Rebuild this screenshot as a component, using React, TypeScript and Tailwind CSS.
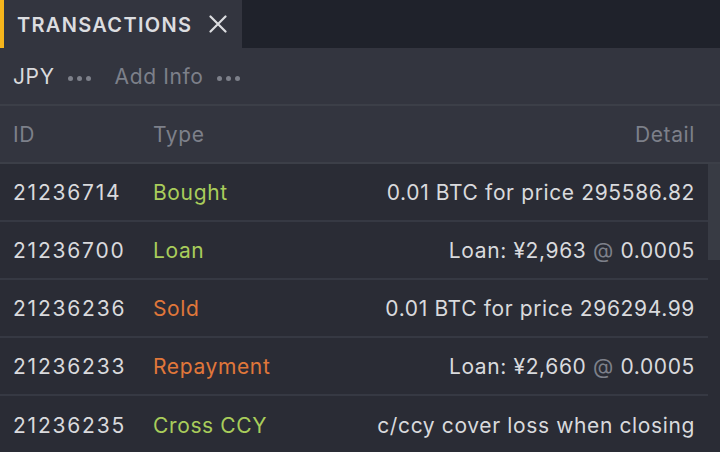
import React from "react";

type Row = { id: string; type: string; kind: "buy" | "sell"; detail: React.ReactNode };

const Loan = ({ amt }: { amt: string }) => (
  <>
    Loan: ¥{amt} <span className="text-[#7d808a]">@</span> 0.0005
  </>
);

const rows: Row[] = [
  { id: "21236714", type: "Bought", kind: "buy", detail: "0.01 BTC for price 295586.82" },
  { id: "21236700", type: "Loan", kind: "buy", detail: <Loan amt="2,963" /> },
  { id: "21236236", type: "Sold", kind: "sell", detail: "0.01 BTC for price 296294.99" },
  { id: "21236233", type: "Repayment", kind: "sell", detail: <Loan amt="2,660" /> },
  { id: "21236235", type: "Cross CCY", kind: "buy", detail: "c/ccy cover loss when closing" },
];

const Dots = () => (
  <span className="flex items-center gap-[4px] ml-[13px] mt-[2px]">
    <span className="w-[5px] h-[5px] rounded-full bg-[#7d808a]" />
    <span className="w-[5px] h-[5px] rounded-full bg-[#7d808a]" />
    <span className="w-[5px] h-[5px] rounded-full bg-[#7d808a]" />
  </span>
);

export default function App() {
  return (
    <div
      className="w-[720px] h-[452px] overflow-hidden bg-[#2a2c35] text-[#d9dadd] text-[21px] tracking-[0.03em]"
      style={{ fontFamily: "Inter, 'Noto Sans', sans-serif" }}
    >
      {/* tab bar */}
      <div className="flex h-[48px] bg-[#1f222b]">
        <div className="flex items-center w-[242px] h-full bg-[#33353f] border-l-4 border-[#f6b51c] pl-[13px]">
          <span className="font-semibold tracking-[0.065em] text-[20px] text-[#dcdde0] mt-[1px]">TRANSACTIONS</span>
          <svg className="ml-[17px]" width="18" height="18" viewBox="0 0 18 18">
            <path d="M1.5 1.5 L16.5 16.5 M16.5 1.5 L1.5 16.5" stroke="#dcdde0" strokeWidth="2.2" strokeLinecap="round" />
          </svg>
        </div>
      </div>
      {/* toolbar */}
      <div className="flex items-center h-[58px] pt-[2px] bg-[#33353f] border-b-2 border-[#3c3f48] px-[13px]">
        <span className="text-[#d9dadd]">JPY</span>
        <Dots />
        <span className="ml-[24px] text-[#7d808a]">Add Info</span>
        <Dots />
      </div>
      {/* header */}
      <div className="flex items-center h-[58px] pt-[2px] bg-[#33353f] border-b-2 border-[#3c3f48] pl-[13px] pr-[25px] text-[#7d808a]">
        <span className="w-[140px]">ID</span>
        <span className="flex-1">Type</span>
        <span>Detail</span>
      </div>
      {/* body */}
      <div className="flex">
        <div className="flex-1">
          {rows.map((r, i) => (
            <div
              key={r.id}
              className={`flex items-center h-[58px] pt-[1px] pl-[13px] pr-[13px] ${i < rows.length - 1 ? "border-b-2 border-[#363943]" : ""}`}
            >
              <span className="w-[140px] tracking-[0.085em]">{r.id}</span>
              <span className={`flex-1 ${r.kind === "buy" ? "text-[#a9cd5b]" : "text-[#e0773a]"}`}>{r.type}</span>
              <span className="text-right">{r.detail}</span>
            </div>
          ))}
        </div>
        <div className="w-[12px] flex flex-col">
          <div className="h-[96px] bg-[#383b44]" />
        </div>
      </div>
    </div>
  );
}
